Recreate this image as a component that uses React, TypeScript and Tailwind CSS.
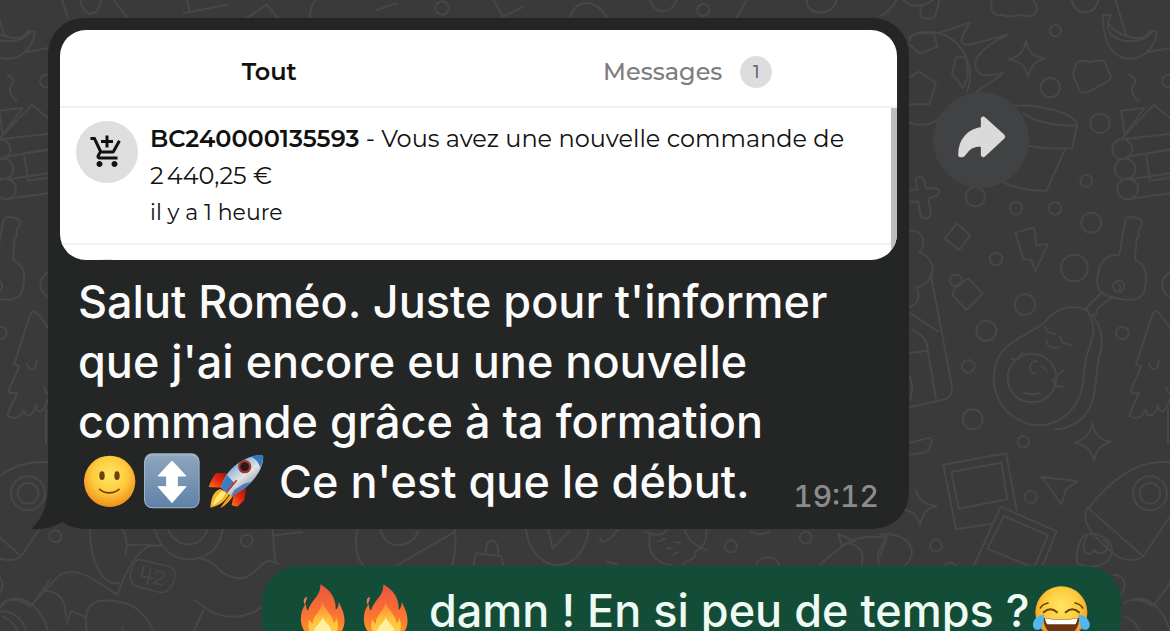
import type { ReactNode } from "react";
import { MdAddShoppingCart } from "react-icons/md";

const Emoji = ({ label, children }: { label: string; children: ReactNode }) => (
  <svg
    role="img"
    aria-label={label}
    viewBox="0 0 189 180"
    className="inline-block h-[60px] w-[63px] align-top"
  >
    {children}
  </svg>
);

const Smile = () => (
  <Emoji label="smile">
    <defs>
      <radialGradient id="smile-face" cx="50%" cy="38%" r="62%">
        <stop offset="0" stopColor="#ffe766" />
        <stop offset="0.55" stopColor="#fdcb3c" />
        <stop offset="1" stopColor="#f08f1a" />
      </radialGradient>
    </defs>
    <circle cx="95" cy="88" r="77" fill="url(#smile-face)" />
    <ellipse cx="72" cy="71" rx="8" ry="13" fill="#6b4310" />
    <ellipse cx="117" cy="71" rx="8" ry="13" fill="#6b4310" />
    <path d="M65 112c16 14 42 14 58 0" fill="none" stroke="#6b4310" strokeWidth="5" strokeLinecap="round" />
  </Emoji>
);

const UpDown = () => (
  <Emoji label="up-down arrow">
    <defs>
      <linearGradient id="updown-bg" x1="0" y1="0" x2="0" y2="1">
        <stop offset="0" stopColor="#8ea5bd" />
        <stop offset="1" stopColor="#5e82a8" />
      </linearGradient>
    </defs>
    <rect x="9" y="4" width="167" height="165" rx="25" fill="#9db4ca" />
    <rect x="12" y="11" width="161" height="155" rx="22" fill="url(#updown-bg)" />
    <path d="M93 27l42 45h-26v32h26l-42 48-42-48h26V72H51z" fill="#fff" stroke="#fff" strokeWidth="3" strokeLinejoin="round" />
  </Emoji>
);

const Rocket = () => (
  <Emoji label="rocket">
    <defs>
      <linearGradient id="rocket-body" x1="0.2" y1="0.1" x2="0.75" y2="0.8">
        <stop offset="0" stopColor="#3f82c4" />
        <stop offset="0.35" stopColor="#a9c6dd" />
        <stop offset="0.6" stopColor="#e4e3df" />
        <stop offset="1" stopColor="#7f9cb5" />
      </linearGradient>
      <linearGradient id="rocket-fin" x1="0" y1="1" x2="1" y2="0">
        <stop offset="0" stopColor="#ff7a1c" />
        <stop offset="0.5" stopColor="#e32a12" />
        <stop offset="1" stopColor="#a91008" />
      </linearGradient>
    </defs>
    <path d="M69 63l-33 0c-10 12-17 27-22 42l40 2z" fill="url(#rocket-fin)" />
    <path d="M118 109l9 0-7 36-20 19-17-4 6-34z" fill="url(#rocket-fin)" />
    <path d="M48 111c-20 8-27 28-29 56 26-5 45-18 58-43z" fill="#f7b625" />
    <path d="M55 117c-15 10-24 24-29 43 19-10 32-21 40-38z" fill="#ffe97a" />
    <path d="M80 125l-32 44c16-8 30-21 40-39z" fill="#f6a41d" />
    <path d="M51 107c9-43 55-96 126-98 5 39-30 93-96 123z" fill="url(#rocket-body)" />
    <path d="M141 14c12-4 24-6 36-5 1 13-2 26-8 38-4-15-14-26-28-33z" fill="#3479bd" />
    <path d="M51 107c3-13 9-26 18-38l22 24-25 28z" fill="#3c7cc0" />
    <path d="M81 132l10-18 28-18c8-3 17-4 24-5-16 17-36 31-62 41z" fill="#4a7fb4" />
    <path d="M67 122l31-37" stroke="#c8301c" strokeWidth="5" />
    <circle cx="122" cy="44" r="20" fill="#9b3730" />
    <circle cx="122" cy="44" r="13" fill="#30151d" />
  </Emoji>
);

const Fire = ({ id }: { id: string }) => (
  <Emoji label="fire">
    <defs>
      <linearGradient id={id} x1="0" y1="0" x2="0" y2="1">
        <stop offset="0" stopColor="#e9543c" />
        <stop offset="0.5" stopColor="#fb6f35" />
        <stop offset="1" stopColor="#ff9d1e" />
      </linearGradient>
      <linearGradient id={`${id}-core`} x1="0" y1="0" x2="0" y2="1">
        <stop offset="0" stopColor="#fb8238" />
        <stop offset="0.5" stopColor="#ffc23a" />
        <stop offset="1" stopColor="#ffd84d" />
      </linearGradient>
    </defs>
    <path
      d="M88 10c30 17 48 42 46 77 7-6 9-14 9-24 17 30 21 54 15 74-7 24-31 38-61 38-38 0-63-20-67-53-2-20 2-39 15-54 0 9 1 15 6 21 7-31 39-43 37-79z"
      fill={`url(#${id})`}
    />
    <path d="M41 72c-6-15-2-22 8-24-3 9-5 17-8 24z" fill="#ef7954" />
    <path d="M94 62c5 23 32 38 34 65 5-4 7-10 8-16 15 40-8 61-39 61-35 0-53-26-42-57 3 8 6 11 10 14 0-28 26-37 29-67z" fill={`url(#${id}-core)`} />
    <path d="M95 108c5 15 25 26 26 44 1 14-11 23-26 23-16 0-27-10-26-24 2-18 24-26 26-43z" fill="#fff0a0" />
  </Emoji>
);

const Joy = () => (
  <Emoji label="joy">
    <defs>
      <radialGradient id="joy-face" cx="50%" cy="38%" r="62%">
        <stop offset="0" stopColor="#ffe766" />
        <stop offset="0.55" stopColor="#fdcb3c" />
        <stop offset="1" stopColor="#f08f1a" />
      </radialGradient>
    </defs>
    <circle cx="94" cy="94" r="78" fill="url(#joy-face)" />
    <g fill="none" stroke="#70440d" strokeLinecap="round">
      <path d="M31 81c5-9 12-13 23-15M158 81c-5-9-12-13-23-15" strokeWidth="5" />
      <path d="M41 94c13-12 27-12 40 0M107 94c13-12 27-12 40 0" strokeWidth="6" />
    </g>
    <path d="M40 110c34 7 74 7 108 0-1 36-20 54-54 54s-53-18-54-54z" fill="#6b350d" />
    <path d="M45 112c32 6 66 6 98 0-2 9-4 14-7 18H52c-3-4-6-9-7-18z" fill="#fff" />
    <path d="M42 101c-15 0-31 12-33 27-2 13 7 20 17 18 15-3 14-28 16-45zM146 101c15 0 31 12 33 27 2 13-7 20-17 18-15-3-14-28-16-45z" fill="#51b7ee" />
  </Emoji>
);

// One column of wallpaper drawings, reused on both sides of the chat
const DoodleColumn = () => (
  <>
    <g transform="scale(0.3333)">
      <path d="M0 48C20 40 38 22 50 0M70 0c20 22 60 24 88 0M125 20c-8 24-6 34 18 37 24 0 26-14 35-57M335 0c-6 34 8 50 30 44 20 10 36 6 52 0 24 10 60 4 52-24 2-12-8-16-10-20M575 0c12 50 70 50 80 0" />
      <path d="M88 112c40-26 120-24 158 38 32 50 30 90 14 126M88 122c6-12 8-18 24-22h48l13 40-53 20-38-30M88 232l30-17 50 34-20 64H88M88 368c30 12 60 8 92-12M258 172h-30l-12 50 34 42 14-40z" />
      <path d="M180 98l90-30c-26 44-34 58-16 66 30 2 80-20 130-30-60 28-96 60-98 88 2 30 20 44 84 26-30 30-60 40-80 56" />
      <path d="M438 122c6 34 20 48 58 54-32 6-44 24-52 54-6-32-22-46-58-52 32-8 46-24 52-56zM590 190c6-10 36-8 42-2 10-8 30-8 42-4l20 48c-4 14-60 38-74 46-20 2-24-6-28-26-20-24-10-46-2-62z" />
      <path d="M706 0l34 108M668 46l24-2-8 26c30 40 110 64 126 22l22 4c-10 56-50 84-90 80-50-8-66-50-72-100zM684 70c-6 30 20 48 50 52 40 4 70-6 84-30M806 156l64-12M748 224c24 14 22 20 8 40 0 28 10 26 20 40" />
      <circle cx="526" cy="92" r="17" /><circle cx="511" cy="263" r="29" /><circle cx="660" cy="370" r="29" /><circle cx="619" cy="543" r="18" /><circle cx="286" cy="590" r="29" /><circle cx="865" cy="243" r="19" />
      <path d="M405 318c60-8 190 22 186 58-50 6-130-10-160-36M591 376l-14 68c-50 4-100 0-134-8M556 446l-56 126c-60 0-100-10-132-26" />
      <path d="M724 332l70-8-60 80zM728 412l94-98 60 50M726 418l144-16M740 470l130-20M750 538l120-18M740 598l130-18M798 460l72-12M798 460l12 82 60-8" />
      <circle cx="727" cy="448" r="30" /><circle cx="735" cy="507" r="31" /><circle cx="743" cy="567" r="31" />
      <path d="M90 572l22-4-6-26c0-12 24-14 26-2l6 26c50-10 54 22 8 28l6 50c-4 14-28 14-30 2l-8-42-22 2" />
    </g>
    <g transform="translate(0 200) scale(0.3333)">
      <path d="M88 92c40-4 54 36 30 66 56 16 54 92-10 104 18 30 2 50-20 60M152 222l64 338c0 26-8 36-30 40l-98 22M88 338l86 56M96 388c40 20 46 36 48 68l24 140M88 460l54-8M90 530c8 20 8 46 0 70" />
      <path d="M230 70l40 36-32 44-44-34zM406 98l56-16 8 54 34-4-38 82-12-34-24-2zM265 236l44 44-50 50-42-46 12-28z" />
      <circle cx="408" cy="25" r="19" /><circle cx="525" cy="25" r="19" /><circle cx="348" cy="177" r="19" /><circle cx="634" cy="68" r="30" /><circle cx="583" cy="204" r="40" /><circle cx="435" cy="314" r="31" /><circle cx="319" cy="392" r="30" /><circle cx="265" cy="499" r="19" /><circle cx="727" cy="399" r="19" /><circle cx="278" cy="658" r="30" /><circle cx="228" cy="242" r="18" /><circle cx="887" cy="254" r="40" />
      <path d="M718 164l18-102c4-16 48-14 50 6 0 20-18 16-8 38-20 18-2 28-12 48v26c40 18 36 56 26 96-14 34-60 24-102 14-40-14-42-34-36-70 10-44 30-56 64-56zM660 282l-40 42 10 22 18-2 6-20 44-34" />
      <circle cx="716" cy="259" r="17" /><path d="M712 250c12 4 12 14 4 20" />
      <path d="M620 330c-50-20-90-6-124 34-40 40-112 50-142 112-26 60-10 130 40 170 60 44 130 40 180-16 50-60 28-110 50-176 16-46 28-70-4-124zM634 346c30 28 36 70 28 106-18 60-8 110-30 166-24 50-70 70-110 70" />
      <circle cx="456" cy="534" r="73" />
      <path d="M495 380c2 14 12 20 30 22M500 418c-2 24 20 28 36 24M540 410c4 18 16 26 34 24M394 476c18 8 24 2 34-20M472 484c-30-4-28 36-4 38M484 500c6 2 12 4 16 12M518 542l32-32M518 542l14 18h18M432 578c18 8 32 6 48 2" />
      <path d="M870 384c-20-30-38-60-50-46-14 30-28 90-52 154l16 8-32 70 4 10 22-2c-10 26-22 40-30 70 24 14 40 0 50-18 4 28 28 18 36-14 4 28 24 24 36-20M808 488c0 26 30 28 28-4M858 560c2 12 6 18 12 24M864 630v100" />
    </g>
    <g transform="translate(0 410) scale(0.3333)">
      <path d="M88 98l58-14c14-2 8 20 0 36-8 8-20 10-58 14M108 240c6 28 20 42 62 48-28 6-40 18-50 58-6-28-20-42-46-46M638 40c6 34 20 48 54 56-34 10-44 26-50 56-8-32-22-46-58-54 32-8 44-24 54-58z" />
      <path d="M190 164l188-34 32 172M190 164l38 194 106-16M214 186l150-28 18 110-146 28zM282 466l80-176 168 74-42 102M322 416l50-98 132 58-42 98zM482 200l110 14-34 24-14 46c-16-20-20-40-62-84z" />
      <circle cx="430" cy="95" r="17" /><circle cx="452" cy="261" r="18" /><circle cx="168" cy="407" r="18" /><circle cx="810" cy="250" r="51" /><circle cx="810" cy="250" r="31" /><circle cx="210" cy="482" r="24" />
      <path d="M890 160c-90-18-170 20-262 130-20 16-12 50 4 72 28 34 60 70 94 84 40 10 66 0 76-26l74-110M622 292l162 142M610 378c30-16 90 0 86 50-8 40-60 52-104 32-4-30-2-52 18-82zM620 380c-20 40 0 70 24 40 20 30 60-12 26-30" />
      <path d="M0 374c60-6 96 20 96 54-2 20-16 36-32 46M20 386L0 440M700 494c40 0 40 40 20 64M732 580c60-40 120 10 140 90M760 570c50-4 50 30 66 10l50-70M734 620c30 10 50 40 50 70" />
    </g>
  </>
);

const Wallpaper = () => (
  <svg aria-hidden="true" className="absolute top-0 left-0 h-[631px] w-[1170px]" viewBox="0 0 1170 631">
    <g fill="none" stroke="#474747" strokeWidth="6" strokeLinecap="round" strokeLinejoin="round">
      <g transform="translate(880 0)"><DoodleColumn /></g>
      <g transform="translate(-242 0)"><DoodleColumn /></g>
      <g transform="translate(0 440) scale(0.3333)">
        <path d="M270 264c0 80 20 150 70 166h18M352 464c20-60 54-124 92-144 14-4 30-2 40-4M364 264c14 20 20 50 12 80M380 314h80M464 270c20 60 60 92 116 88 50-8 80-40 88-88M502 264c30 70 104 60 120 4M600 356c30 0 50 28 70 44 60 30 76 10 106-16 20-24 30-26 60-12M818 270l8 100M826 286l80-10" />
        <path d="M414 358l90 20c20 6 28 26 16 50-14 28-24 32-46 28l-62-16c-20-6-26-26-18-44 4-20 10-30 20-38zM432 378l-8 30 34 8M452 386l-10 46M464 400c20-14 36 0 22 14l-26 14 28 8" strokeWidth="5" />
        <path d="M0 502c40-44 60-20 90-2l90-96c60-30 120 30 172 60M134 452c40 0 64 26 64 80M200 552l14-40 46 22M260 573c-10-60 10-90 50-92 70 0 120 20 150 92M0 514c50 0 70 30 78 59M368 560v20M584 480l30 22c50 40 120 36 170 0M610 510l-28 63" />
        <circle cx="166" cy="289" r="18" /><circle cx="740" cy="302" r="18" />
      </g>
      <g transform="translate(260 520) scale(0.3333)">
        <path d="M292 30c-8 40-6 80 20 110M362 30c14 60 90 60 112 4M580 38L410 136M584 30c6 40 0 80-8 108M640 136l8-36 76 8 6 28M678 96c-4-46 40-46 36 4M798 30c20 140 170 140 188 0M866 30l12 56 48-50" />
      </g>
      <g transform="translate(560 510) scale(0.3333)">
        <path d="M120 84c4 18 26 14 52-24M254 64c40 20 60 6 66-4M272 70c-14 50 10 90 60 94M374 60c10 30 34 50 66 60M440 60c0 34-14 56-32 64 0 28-20 20-40 40M294 94l22-8M342 96l18 2M320 114l16 2M340 134l14-8M574 64c20 12 40 10 56 0M588 164c10-30 60-30 70 0M140 156l30 6M780 164c70-60 100-96 200-80M834 72l52 22-40 12zM870 102c34 6 42 30 36 60M980 74c-10 40-40 50-20 90" />
        <circle cx="513" cy="109" r="18" /><circle cx="737" cy="83" r="18" />
      </g>
      <g transform="scale(0.3333)">
        <path d="M186 0l18 54M240 0c10 50 50 60 64 0M340 0l40 50M550 40l130-26M560 0l10 36M740 54l60-40 34 40M930 54c0-30 8-40 16-54M1130 30l60-20M1480 0l30 50 60-30M1710 50c20-50 70-60 110 0M1950 0c10 40 60 50 80 0M2210 54l30-54M2420 0c0 50 80 50 90 0" />
        <circle cx="1326" cy="24" r="20" /><circle cx="2110" cy="30" r="18" />
      </g>
    </g>
  </svg>
);

const NotificationCard = () => (
  <section className="h-[230px] overflow-hidden rounded-[26px] bg-white font-['Montserrat','Inter',sans-serif] text-[24px] text-[#111111]">
    <div className="grid h-[78px] grid-cols-2 border-b-2 border-[#f0f0f0] pt-2">
      <button type="button" className="font-semibold">
        Tout
      </button>
      <button type="button" className="flex items-center justify-center gap-[18px] font-medium text-[#7d7d7d]">
        Messages
        <span className="flex size-8 items-center justify-center rounded-full bg-[#dddddf] text-[18px] text-[#6d6d6f]">1</span>
      </button>
    </div>
    <div className="flex h-[152px]">
      <div className="min-w-0 flex-1">
        <div className="flex gap-3 border-b-2 border-[#f0f0f0] px-4 py-3">
          <div className="mt-px flex size-[62px] shrink-0 items-center justify-center rounded-full bg-[#dededf]">
            <MdAddShoppingCart className="size-9" />
          </div>
          <div className="leading-[37px]">
            <p>
              <strong className="font-semibold">BC240000135593</strong> - Vous avez une nouvelle commande de
              2{"\u202f"}440,25 €
            </p>
            <p className="text-[22px] leading-[37px]">il y a 1 heure</p>
          </div>
        </div>
        <div className="px-4 pt-[14px]">
          <div className="size-[62px] rounded-full bg-[#dededf]" />
        </div>
      </div>
      <div className="w-1.5 bg-[#bcbec1]" />
    </div>
  </section>
);

const App = () => {
  return (
    <main className="relative h-screen overflow-hidden bg-[#3a3a3a] font-['Inter',sans-serif]">
      <Wallpaper />

      {/* Incoming message */}
      <div className="relative flex items-start gap-6 pt-[18px] pr-[141px] pl-12">
        <article className="relative min-w-0 flex-1 rounded-[36px] bg-[#242625] px-3 pt-3 pb-[17px]">
          <svg aria-hidden="true" viewBox="30 480 34 50" className="absolute -bottom-px -left-[18px] h-[50px] w-[34px]">
            <path d="M48 480C49 505 42 519 31 529C43 530 54 527 62 522L62 480Z" fill="#242625" />
          </svg>
          <NotificationCard />
          <div className="grid px-[18px] pt-3">
            <p className="col-start-1 row-start-1 text-[45px] leading-[60px] font-medium text-[#fbfbfb]">
              Salut Roméo. Juste pour t'informer que j'ai encore eu une nouvelle commande grâce à ta formation{" "}
              <span className="whitespace-nowrap">
                <Smile />
                <UpDown />
                <Rocket />
              </span>{" "}
              Ce n'est que le début.
            </p>
            <time className="col-start-1 row-start-1 self-end justify-self-end text-[30px] leading-[32px] font-medium text-[#8b8d8c] tabular-nums">
              19:12
            </time>
          </div>
        </article>
        <button
          type="button"
          aria-label="Transférer"
          className="mt-[74px] size-24 shrink-0 rounded-full bg-[#414244]"
        >
          <svg viewBox="0 0 288 288" className="size-full">
            <path
              d="M83 188C83 145 109 116 151 112V81L209 134L151 188V156C119 154 103 166 89 188Z"
              fill="#dadada"
              stroke="#dadada"
              strokeWidth="15"
              strokeLinejoin="round"
            />
          </svg>
        </button>
      </div>

      {/* Reply */}
      <div className="relative mt-[37px] pr-[49px] pl-[262px]">
        <article className="rounded-[36px] bg-[#144d37] px-[29px] py-[15px]">
          <p className="text-[45px] leading-[60px] font-medium whitespace-nowrap text-[#effaf4]">
            <Fire id="fire-left" />
            <Fire id="fire-right" /> damn ! En si peu de temps ?<Joy />
          </p>
        </article>
      </div>
    </main>
  );
};

export default App;
